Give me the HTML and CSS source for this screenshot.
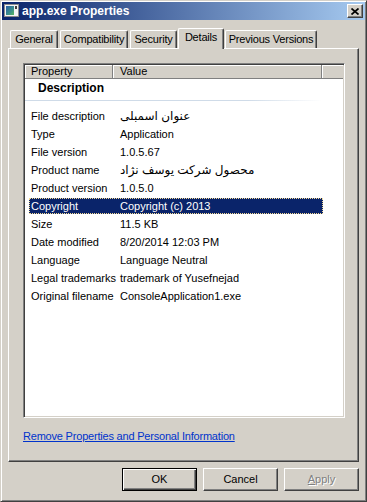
FILE: index.html
```html
<!DOCTYPE html>
<html lang="en">

<head>
    <meta charset="UTF-8">
    <meta name="viewport" content="width=device-width, initial-scale=1.0">
    <title>app.exe Properties</title>

    <link rel="stylesheet" href="styles.css">
</head>

<body>
    <div class="window">
        <div class="titlebar">
            <svg class="app-icon" width="16" height="16" viewBox="0 0 16 16">
                <defs>
                    <linearGradient id="screen" x1="0" y1="0" x2="1" y2="1">
                        <stop offset="0" stop-color="#2b5fa6" />
                        <stop offset="0.6" stop-color="#3a8f8a" />
                        <stop offset="1" stop-color="#5cb85c" />
                    </linearGradient>
                </defs>
                <rect x="0.5" y="1.5" width="14" height="12" fill="#f4f4f4" stroke="#8c8c8c" />
                <rect x="2" y="3" width="8" height="9" fill="url(#screen)" />
                <rect x="11" y="3" width="2" height="3" fill="#404040" />
            </svg>
            <span class="title">app.exe Properties</span>
            <button class="close-btn">
                <svg width="8" height="7" viewBox="0 0 8 7">
                    <path d="M0.5 0.5 L7.5 6.5 M7.5 0.5 L0.5 6.5" stroke="#000" stroke-width="1.7" />
                </svg>
            </button>
        </div>

        <div class="content">
            <ul class="tabs">
                <li class="tab tab-general">General</li>
                <li class="tab tab-compat">Compatibility</li>
                <li class="tab tab-security">Security</li>
                <li class="tab tab-details selected">Details</li>
                <li class="tab tab-previous">Previous Versions</li>
            </ul>

            <div class="panel">
                <div class="listbox">
                    <div class="list-head">
                        <div class="col-head col-prop">Property</div>
                        <div class="col-head col-value">Value</div>
                        <div class="col-head col-fill"></div>
                    </div>

                    <div class="group">Description</div>
                    <div class="group-rule"></div>

                    <ul class="rows">
                        <li class="row"><span class="prop">File description</span><span class="value arabic">عنوان اسمبلی</span></li>
                        <li class="row"><span class="prop">Type</span><span class="value">Application</span></li>
                        <li class="row"><span class="prop">File version</span><span class="value">1.0.5.67</span></li>
                        <li class="row"><span class="prop">Product name</span><span class="value arabic">محصول شرکت یوسف نژاد</span></li>
                        <li class="row"><span class="prop">Product version</span><span class="value">1.0.5.0</span></li>
                        <li class="row selected"><span class="prop">Copyright</span><span class="value">Copyright (c) 2013</span></li>
                        <li class="row"><span class="prop">Size</span><span class="value">11.5 KB</span></li>
                        <li class="row"><span class="prop">Date modified</span><span class="value">8/20/2014 12:03 PM</span></li>
                        <li class="row"><span class="prop">Language</span><span class="value">Language Neutral</span></li>
                        <li class="row"><span class="prop">Legal trademarks</span><span class="value">trademark of Yusefnejad</span></li>
                        <li class="row"><span class="prop">Original filename</span><span class="value">ConsoleApplication1.exe</span></li>
                    </ul>
                </div>

                <a class="remove-link" href="#">Remove Properties and Personal Information</a>
            </div>

            <div class="buttons">
                <button class="btn btn-default">OK</button>
                <button class="btn">Cancel</button>
                <button class="btn btn-disabled"><u>A</u>pply</button>
            </div>
        </div>
    </div>
</body>

</html>
```

FILE: styles.css
```css
* {
    margin: 0;
    padding: 0;
    box-sizing: border-box;
}

body {
    font-family: "Liberation Sans", "DejaVu Sans", sans-serif;
    font-size: 11px;
    color: #000;
    background: #d4d0c8;
}

ul {
    list-style: none;
}

.window {
    width: 367px;
    height: 502px;
    display: flex;
    flex-direction: column;
    padding: 1px;
    background: #d4d0c8;
    border: 1px solid;
    border-color: #d4d0c8 #404040 #404040 #d4d0c8;
    box-shadow: inset 1px 1px #fff, inset -1px -1px #808080;
}

/* title bar */

.titlebar {
    height: 18px;
    display: flex;
    align-items: center;
    padding: 0 2px;
    background: linear-gradient(to right, #0a246a, #a6caf0);
}

.app-icon {
    flex-shrink: 0;
    margin-right: 2px;
}

.title {
    color: #fff;
    font-weight: bold;
    font-size: 12px;
    line-height: 18px;
}

.close-btn {
    margin-left: auto;
    width: 16px;
    height: 14px;
    display: flex;
    align-items: center;
    justify-content: center;
    background: #d4d0c8;
    border: 1px solid;
    border-color: #fff #404040 #404040 #fff;
    box-shadow: inset -1px -1px #808080;
}

.close-btn svg {
    display: block;
}

/* dialog body */

.content {
    flex: 1;
    display: flex;
    flex-direction: column;
    padding: 8px 6px 7px 6px;
}

.tabs {
    height: 20px;
    display: flex;
    align-items: flex-end;
    gap: 2px;
    padding-left: 2px;
}

.tab {
    height: 18px;
    line-height: 17px;
    text-align: center;
    letter-spacing: -0.2px;
    border-top: 1px solid #fff;
    border-left: 1px solid #fff;
    border-right: 1px solid #404040;
    border-radius: 2px 2px 0 0;
    box-shadow: inset -1px 0 #808080;
    white-space: nowrap;
}

.tab-general {
    width: 48px;
}

.tab-compat {
    width: 68px;
}

.tab-security {
    width: 47px;
}

.tab-details {
    width: 46px;
}

.tab-previous {
    width: 92px;
}

.tab.selected {
    position: relative;
    z-index: 1;
    height: 21px;
    padding-bottom: 3px;
    margin: 0 -1px -1px -1px;
    background: #d4d0c8;
}

.panel {
    height: 414px;
    padding: 14px 13px 0 14px;
    border: 1px solid;
    border-color: #fff #404040 #404040 #fff;
    box-shadow: inset -1px -1px #808080;
}

/* details list */

.listbox {
    height: 355px;
    padding: 1px;
    background: #fff;
    border: 1px solid;
    border-color: #808080 #fff #fff #808080;
    box-shadow: inset 1px 1px #404040, inset -1px -1px #d4d0c8;
}

.list-head {
    display: flex;
    height: 14px;
    background: #d4d0c8;
    border-bottom: 1px solid #808080;
}

.col-head {
    line-height: 13px;
    padding-left: 6px;
    border-right: 1px solid #808080;
    box-shadow: inset 1px 1px #fff;
}

.col-prop {
    width: 88px;
}

.col-value {
    width: 209px;
    padding-left: 7px;
}

.col-fill {
    flex: 1;
    border-right: none;
}

.group {
    padding: 2px 0 5px 13px;
    font-weight: bold;
    font-size: 12px;
    line-height: 14px;
}

.group-rule {
    width: 297px;
    height: 1px;
    background: linear-gradient(to right, #cfdbe8 75%, #fff);
}

.rows {
    margin-top: 7px;
}

.row {
    display: flex;
    width: 294px;
    height: 16px;
    margin: 0 0 2px 4px;
    line-height: 14px;
    border: 1px solid transparent;
    white-space: nowrap;
}

.prop {
    width: 84px;
    padding-left: 1px;
}

.value {
    padding-left: 6px;
}

.arabic {
    font-size: 12px;
}

.row.selected {
    background: #0a246a;
    color: #fff;
    border: 1px dotted #f5db95;
}

.remove-link {
    display: block;
    margin-top: 12px;
    line-height: 13px;
    letter-spacing: -0.2px;
    color: #0033cc;
    text-decoration: underline;
    align-self: flex-start;
}

/* buttons */

.buttons {
    display: flex;
    justify-content: flex-end;
    gap: 6px;
    margin-top: 6px;
}

.btn {
    width: 75px;
    height: 23px;
    font-family: inherit;
    font-size: 11px;
    line-height: 21px;
    color: #000;
    background: #d4d0c8;
    border: 1px solid;
    border-color: #fff #404040 #404040 #fff;
    box-shadow: inset -1px -1px #808080;
}

.btn-default {
    border-color: #000;
    box-shadow: inset 1px 1px #fff, inset -1px -1px #404040, inset -2px -2px #808080;
}

.btn-disabled {
    color: #808080;
    text-shadow: 1px 1px #fff;
}
```
